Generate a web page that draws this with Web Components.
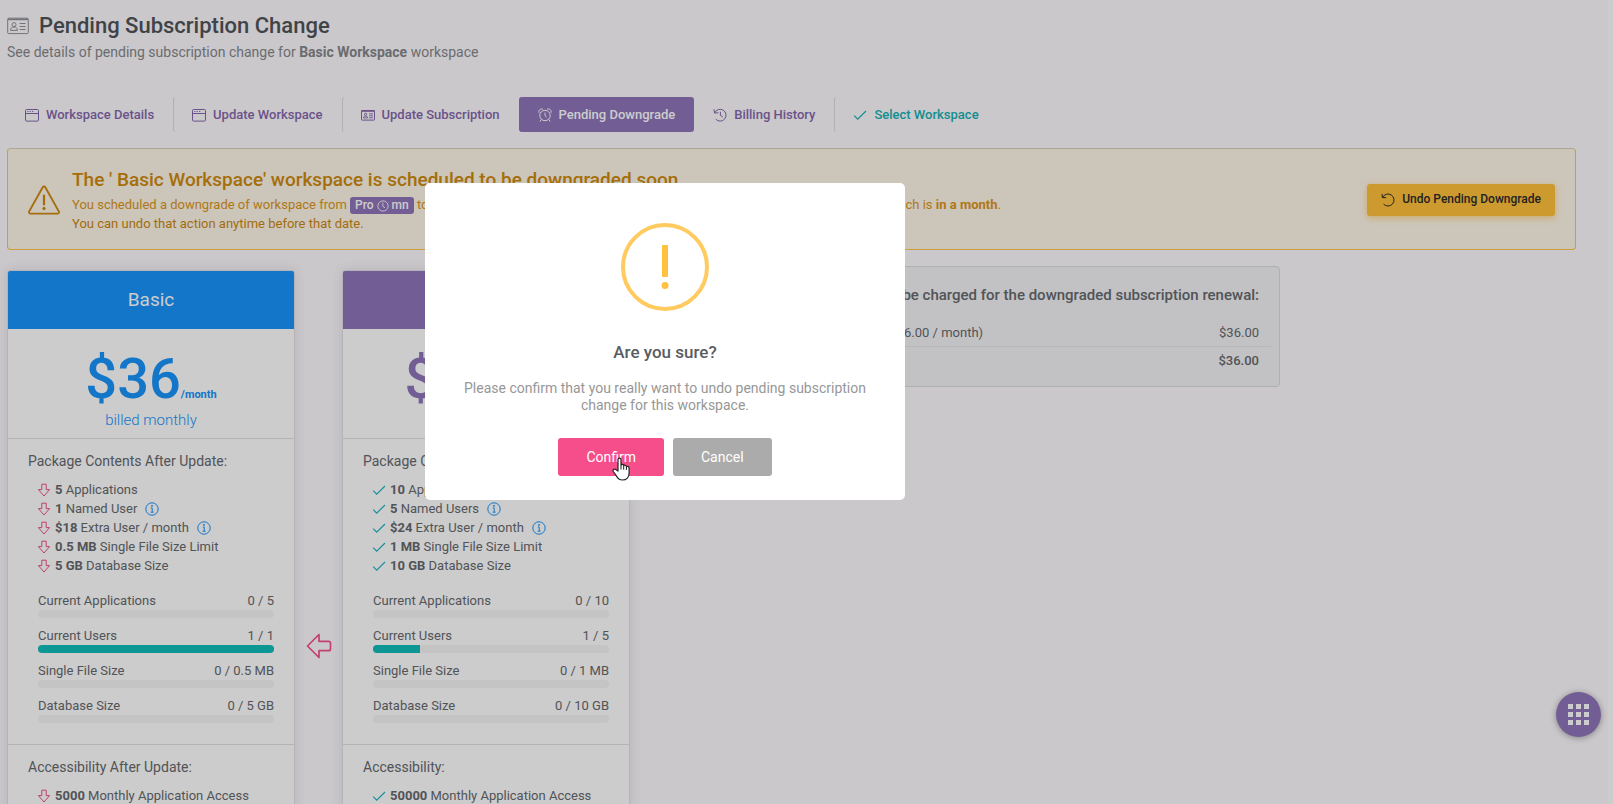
<!DOCTYPE html>
<html lang="en">
<head>
<meta charset="utf-8">
<meta name="viewport" content="width=device-width, initial-scale=1">
<title>Pending Subscription Change</title>
<style>
    html, body {
        height: 100%;
    }
    body {
        margin: 0;
        overflow: hidden;
        background: #fdfafe;
        border-right: 5px solid #ffffff;
        box-sizing: border-box;
        color: #66696e;
        font: 13px/19px Roboto, sans-serif;
    }
    main {
        padding: 13px 32px 0 7px;
    }
    .plans {
        display: flex;
        align-items: flex-start;
        margin-top: 16px;
    }
    .plans charge-summary {
        margin-left: 46px;
    }
    .switch-arrow {
        width: 47px;
        padding-top: 367px;
        text-align: center;
        color: #f4508c;
        --icon-size: 26px;
    }
</style>
</head>
<body>
<main>
    <page-title icon="card" heading="Pending Subscription Change">
        See details of pending subscription change for <b>Basic Workspace</b> workspace
    </page-title>

    <tab-bar>
        <tab-link icon="window">Workspace Details</tab-link>
        <tab-link icon="window">Update Workspace</tab-link>
        <tab-link icon="card-small">Update Subscription</tab-link>
        <tab-link icon="alarm" active>Pending Downgrade</tab-link>
        <tab-link icon="history">Billing History</tab-link>
        <tab-link icon="check" accent>Select Workspace</tab-link>
    </tab-bar>

    <warning-alert heading="The ' Basic Workspace' workspace is scheduled to be downgraded soon" action="Undo Pending Downgrade">
        You scheduled a downgrade of workspace from <plan-badge name="Pro"></plan-badge> to <plan-badge name="Basic"></plan-badge>. The downgrade will occur at the end of the current billing period, which is <b>in a month</b>.<br>
        <span class="dark">You can undo that action anytime before that date.</span>
    </warning-alert>

    <div class="plans">
        <plan-card id="basic"></plan-card>
        <div class="switch-arrow"><ui-icon name="left"></ui-icon></div>
        <plan-card id="pro"></plan-card>
        <charge-summary></charge-summary>
    </div>
</main>
<apps-button></apps-button>
<confirm-modal heading="Are you sure?">
    Please confirm that you really want to undo pending subscription change for this workspace.
</confirm-modal>

<script>
const ICONS = {
    'card': ['0 0 22 18', '<rect x=".7" y="1.2" width="20.6" height="15.4" rx="1"/><path d="M1 2.4h20" stroke-width="1.6"/><circle cx="7" cy="7.6" r="2"/><path d="M3.6 13.4c0-2.6 1.4-3.4 3.4-3.4s3.4.8 3.4 3.4zM12.6 6.5h6M12.6 9.5h6M12.6 12.5h6"/>'],
    'card-small': ['0 0 14 14', '<rect x=".5" y="2.5" width="13" height="9.6" rx=".6"/><path d="M.5 3h13" stroke-width="1.6"/><circle cx="4.600" cy="6.300" r="1.100" stroke-width=".9"/><path d="M2.600 9.900c0-1.400.8-1.900 2-1.900s2 .5 2 1.900zM8 5.800h4M8 7.800h4M8 9.800h4" stroke-width=".9"/>'],
    'window': ['0 0 14 14', '<rect x=".5" y="1.5" width="13" height="11.6" rx="1"/><path d="M1 5.500h12M2.300 3.500h1.200M4.700 3.500h1.200M7.100 3.500h1.200"/>'],
    'alarm': ['0 0 14 14', '<circle cx="7" cy="7.5" r="5.2"/><path d="M7 4.600v3.100l1.600 1.500M3.200 11.500l-1.300 2M10.800 11.500l1.300 2M1 4.800C.2 2.400 2.400.2 4.800 1.200M13 4.800C13.800 2.400 11.600.2 9.200 1.200"/>'],
    'history': ['0 0 14 14', '<path d="M1.700 4.900a5.900 5.900 0 1 1 1.100 6.300M1 1.200l.5 3.900 3.900-.4M7.400 3.800v3.600l2.500 1.700"/>'],
    'undo': ['0 0 14 14', '<path d="M1.600 4.400a6 6 0 1 1 1 6.700M1.200.9v3.700h3.900"/>'],
    'check': ['0 0 14 14', '<path d="M1.200 7.600l3.500 3.500L13 3" stroke-width="1.200"/>'],
    'down': ['0 0 14 14', '<path d="M4.800 1.200h4.400v5.400h3.400L7 13 1.400 6.600h3.400z" stroke-linejoin="round"/>'],
    'left': ['0 0 26 26', '<path d="M13 1.500L1.500 13 13 24.500v-6.800h9.500a2 2 0 0 0 2-2v-5.400a2 2 0 0 0-2-2H13z" stroke-width="1.700" stroke-linejoin="round"/>'],
    'info': ['0 0 14 14', '<circle cx="7" cy="7" r="6.200"/><path d="M5.800 6h1.400v4M5.600 10.200h3"/><circle cx="7" cy="3.900" r=".5" fill="currentColor"/>'],
    'clock': ['0 0 14 14', '<circle cx="7" cy="7" r="6"/><path d="M6.800 3v4.300l2.500 1.900"/>'],
    'warning': ['0 0 32 30', '<path d="M14.700 2.200a1.500 1.500 0 0 1 2.600 0l13.500 24.200a1.500 1.500 0 0 1-1.300 2.200h-27a1.500 1.500 0 0 1-1.300-2.200z" stroke-width="1.900"/><path d="M16 10.500v9" stroke-width="2.200" stroke-linecap="round"/><circle cx="16" cy="23.500" r="1.200" fill="currentColor"/>']
};

class UiIcon extends HTMLElement {
    constructor() {
        super();
        this.attachShadow({ mode: 'open' });
    }

    connectedCallback() {
        const [box, shapes] = ICONS[this.getAttribute('name')];
        this.shadowRoot.innerHTML = `
        <style>
            :host {
                display: inline-flex;
                flex: none;
                vertical-align: middle;
            }
            svg {
                width: var(--icon-size, 14px);
                height: var(--icon-size, 14px);
                fill: none;
                stroke: currentColor;
            }
        </style>
        <svg viewBox="${box}" aria-hidden="true">${shapes}</svg>
        `;
    }
}

class PageTitle extends HTMLElement {
    constructor() {
        super();
        this.attachShadow({ mode: 'open' });
    }

    connectedCallback() {
        this.shadowRoot.innerHTML = `
        <style>
            :host {
                display: block;
            }
            h1 {
                display: flex;
                align-items: center;
                gap: 10px;
                margin: 0;
                color: #4f5459;
                font-size: 22px;
                line-height: 26px;
                font-weight: 500;
            }
            ui-icon {
                --icon-size: 22px;
                color: #909296;
            }
            p {
                margin: 3px 0 0;
                color: #86888b;
                font-size: 14px;
                line-height: 20px;
            }
        </style>
        <h1><ui-icon name="${this.getAttribute('icon')}"></ui-icon>${this.getAttribute('heading')}</h1>
        <p><slot></slot></p>
        `;
    }
}

class TabBar extends HTMLElement {
    constructor() {
        super();
        this.attachShadow({ mode: 'open' });
    }

    connectedCallback() {
        this.shadowRoot.innerHTML = `
        <style>
            :host {
                display: block;
                margin-top: 35px;
            }
            nav {
                display: flex;
            }
        </style>
        <nav><slot></slot></nav>
        `;
    }
}

class TabLink extends HTMLElement {
    constructor() {
        super();
        this.attachShadow({ mode: 'open' });
    }

    connectedCallback() {
        this.shadowRoot.innerHTML = `
        <style>
            :host {
                display: block;
            }
            a {
                display: flex;
                align-items: center;
                gap: 7px;
                height: 35px;
                padding: 0 19px 0 18px;
                border-left: 1px solid #dcdce0;
                border-radius: 3px;
                color: #8568ad;
                font-weight: 500;
                text-decoration: none;
            }
            :host(:first-child) a {
                padding-left: 17px;
                border-color: transparent;
            }
            :host([active]) a {
                background: #9075bb;
                border-color: #9075bb;
                color: #ffffff;
            }
            :host([icon="history"]) a {
                border-color: transparent;
            }
            :host([accent]) a {
                color: #16b2b4;
            }
        </style>
        <a href="#"><ui-icon name="${this.getAttribute('icon')}"></ui-icon><slot></slot></a>
        `;
    }
}

class PlanBadge extends HTMLElement {
    constructor() {
        super();
        this.attachShadow({ mode: 'open' });
    }

    connectedCallback() {
        this.shadowRoot.innerHTML = `
        <style>
            :host {
                display: inline-flex;
                align-items: center;
                gap: 3px;
                height: 17px;
                padding: 0 5px;
                border-radius: 3px;
                background: #9075bb;
                color: #ffffff;
                font-size: 12px;
                font-weight: 500;
                vertical-align: middle;
                --icon-size: 12px;
            }
        </style>
        ${this.getAttribute('name')}<ui-icon name="clock"></ui-icon>mn
        `;
    }
}

class WarningAlert extends HTMLElement {
    constructor() {
        super();
        this.attachShadow({ mode: 'open' });
    }

    connectedCallback() {
        this.shadowRoot.innerHTML = `
        <style>
            :host {
                display: flex;
                align-items: center;
                gap: 12px;
                margin-top: 16px;
                padding: 17px 20px 16px;
                border: 1px solid #ffc548;
                border-top-color: #d8d0bc;
                border-radius: 4px;
                background: #fff7e8;
                color: #dc961a;
            }
            .sign {
                --icon-size: 32px;
                color: #ce8a10;
            }
            .text {
                flex: 1;
            }
            h2 {
                margin: 0 0 1px;
                color: #cf8a0c;
                font-size: 19px;
                line-height: 28px;
                font-weight: 500;
            }
            p {
                margin: 0;
            }
            ::slotted(.dark) {
                color: #cc8810;
            }
            button {
                display: flex;
                align-items: center;
                gap: 7px;
                height: 32px;
                padding: 0 14px;
                border: 0;
                border-radius: 3px;
                background: #ffc13a;
                box-shadow: 0 2px 6px rgba(255, 184, 34, 0.5);
                color: #2b2b2b;
                font: 500 12px/19px Roboto, sans-serif;
            }
        </style>
        <ui-icon class="sign" name="warning"></ui-icon>
        <div class="text">
            <h2>${this.getAttribute('heading')}</h2>
            <p><slot></slot></p>
        </div>
        <button type="button"><ui-icon name="undo"></ui-icon>${this.getAttribute('action')}</button>
        `;
    }
}

const PLANS = {
    basic: {
        name: 'Basic', color: '#1894fc', price: '$36', mark: 'down', markColor: '#f0508a', suffix: ' After Update',
        features: [['5', 'Applications'], ['1', 'Named User', true], ['$18', 'Extra User / month', true], ['0.5 MB', 'Single File Size Limit'], ['5 GB', 'Database Size']],
        usage: [['Current Applications', '0 / 5', 0], ['Current Users', '1 / 1', 100], ['Single File Size', '0 / 0.5 MB', 0], ['Database Size', '0 / 5 GB', 0]],
        access: ['5000', 'Monthly Application Access']
    },
    pro: {
        name: 'Pro', color: '#9075bb', price: '$120', mark: 'check', markColor: '#1fb4c4', suffix: '',
        features: [['10', 'Applications'], ['5', 'Named Users', true], ['$24', 'Extra User / month', true], ['1 MB', 'Single File Size Limit'], ['10 GB', 'Database Size']],
        usage: [['Current Applications', '0 / 10', 0], ['Current Users', '1 / 5', 20], ['Single File Size', '0 / 1 MB', 0], ['Database Size', '0 / 10 GB', 0]],
        access: ['50000', 'Monthly Application Access']
    }
};

class PlanCard extends HTMLElement {
    constructor() {
        super();
        this.attachShadow({ mode: 'open' });
    }

    connectedCallback() {
        const plan = PLANS[this.id];
        const feature = ([amount, label, info]) => `
            <li><ui-icon name="${plan.mark}"></ui-icon><span><b>${amount}</b> ${label}</span>${info ? '<ui-icon class="info" name="info"></ui-icon>' : ''}</li>`;
        this.shadowRoot.innerHTML = `
        <style>
            :host {
                display: block;
                flex: none;
                width: 286px;
                margin-top: 4px;
                border: 1px solid #e1e2e6;
                border-radius: 3px;
                background: #ffffff;
                box-shadow: 0 0 12px rgba(60, 50, 90, 0.12);
                overflow: hidden;
            }
            h3 {
                margin: 0;
                background: ${plan.color};
                color: #ffffff;
                font-size: 19px;
                line-height: 58px;
                font-weight: 400;
                text-align: center;
            }
            .price {
                padding: 18px 0 8px;
                color: ${plan.color};
                text-align: center;
            }
            .amount {
                font-size: 56px;
                line-height: 64px;
                font-weight: 500;
            }
            .amount small {
                font-size: 11px;
                line-height: 11px;
                font-weight: 700;
            }
            .cycle {
                font-size: 15px;
                line-height: 19px;
                font-weight: 300;
            }
            section {
                padding: 12px 20px 21px;
                border-top: 1px solid #e1e2e6;
            }
            h4 {
                margin: 0 0 9px;
                font-size: 14px;
                line-height: 20px;
                font-weight: 400;
            }
            ul {
                margin: 0;
                padding: 0 0 0 9px;
                list-style: none;
            }
            li {
                display: flex;
                align-items: center;
                gap: 4px;
                color: ${plan.markColor};
            }
            li span {
                color: #66696e;
            }
            li b {
                font-weight: 700;
            }
            .info {
                margin-left: 4px;
                color: #1894fc;
            }
            .usage {
                display: grid;
                gap: 8px;
                padding: 16px 0 0 10px;
            }
            label {
                display: flex;
                flex-wrap: wrap;
                justify-content: space-between;
            }
            progress {
                display: block;
                width: 100%;
                height: 8px;
                border: 0;
                border-radius: 4px;
                background: #f6f6f7;
                overflow: hidden;
                appearance: none;
            }
            progress::-webkit-progress-bar {
                background: #f6f6f7;
            }
            progress::-webkit-progress-value {
                background: #0fbdba;
            }
        </style>
        <h3>${plan.name}</h3>
        <div class="price">
            <div class="amount">${plan.price}<small>/month</small></div>
            <div class="cycle">billed monthly</div>
        </div>
        <section>
            <h4>Package Contents${plan.suffix}:</h4>
            <ul>${plan.features.map(feature).join('')}</ul>
            <div class="usage">
                ${plan.usage.map(([label, value, percent]) => `
                <label><span>${label}</span><span>${value}</span><progress max="100" value="${percent}"></progress></label>`).join('')}
            </div>
        </section>
        <section>
            <h4>Accessibility${plan.suffix}:</h4>
            <ul>${feature(plan.access)}</ul>
        </section>
        `;
    }
}

class ChargeSummary extends HTMLElement {
    constructor() {
        super();
        this.attachShadow({ mode: 'open' });
    }

    connectedCallback() {
        this.shadowRoot.innerHTML = `
        <style>
            :host {
                display: block;
                flex: 0 1 604px;
                box-sizing: border-box;
                padding: 18px 8px 12px;
                border: 1px solid #dadbde;
                border-radius: 4px;
                background: #f3f3f5;
            }
            h3 {
                margin: 0;
                padding: 0 12px;
                font-size: 15px;
                line-height: 20px;
                font-weight: 500;
                text-align: right;
            }
            table {
                width: 100%;
                margin-top: 14px;
                border-collapse: collapse;
            }
            td, th {
                padding: 4px 12px;
                font-weight: 400;
                text-align: left;
            }
            td {
                text-align: right;
            }
            tr + tr > * {
                border-top: 1px solid #e4e5e8;
                font-weight: 500;
            }
        </style>
        <h3>The following amount will be charged for the downgraded subscription renewal:</h3>
        <table>
            <tr><th scope="row">Basic workspace, billed monthly ($36.00 / month)</th><td>$36.00</td></tr>
            <tr><th scope="row">Total</th><td>$36.00</td></tr>
        </table>
        `;
    }
}

class AppsButton extends HTMLElement {
    constructor() {
        super();
        this.attachShadow({ mode: 'open' });
    }

    connectedCallback() {
        this.shadowRoot.innerHTML = `
        <style>
            :host {
                position: fixed;
                right: 12px;
                bottom: 67px;
            }
            button {
                display: grid;
                place-content: center;
                width: 45px;
                height: 45px;
                padding: 0;
                border: 0;
                border-radius: 50%;
                background: #9075bb;
                box-shadow: 0 1px 6px rgba(0, 0, 0, 0.35);
            }
            svg {
                width: 21px;
                height: 21px;
                fill: #ffffff;
            }
        </style>
        <button type="button" aria-label="Applications">
            <svg viewBox="0 0 21 21"><path d="M0 0h5v5H0zM8 0h5v5H8zM16 0h5v5h-5zM0 8h5v5H0zM8 8h5v5H8zM16 8h5v5h-5zM0 16h5v5H0zM8 16h5v5H8zM16 16h5v5h-5z"/></svg>
        </button>
        `;
    }
}

class ConfirmModal extends HTMLElement {
    constructor() {
        super();
        this.attachShadow({ mode: 'open' });
    }

    connectedCallback() {
        this.shadowRoot.innerHTML = `
        <style>
            :host {
                position: fixed;
                inset: 0;
                background: rgba(0, 0, 0, 0.2);
            }
            .dialog {
                position: absolute;
                left: 425px;
                top: 183px;
                width: 480px;
                box-sizing: border-box;
                padding: 40px 32px 24px;
                border-radius: 5px;
                background: #ffffff;
                text-align: center;
            }
            .sign {
                display: block;
                width: 88px;
                height: 88px;
                margin: 0 auto;
            }
            h2 {
                margin: 29px 0 0;
                color: #595d62;
                font-size: 17px;
                line-height: 24px;
                font-weight: 500;
            }
            p {
                margin: 16px 0 24px;
                color: #979797;
                font-size: 14px;
                line-height: 17px;
            }
            .buttons {
                display: flex;
                justify-content: center;
                gap: 9px;
            }
            button {
                position: relative;
                height: 38px;
                padding: 0 28px;
                border: 0;
                border-radius: 3px;
                background: #ababab;
                color: #ffffff;
                font: 400 14px/19px Roboto, sans-serif;
            }
            .confirm {
                background: #f64e8b;
            }
            .pointer {
                position: absolute;
                left: 54px;
                top: 19px;
                width: 18px;
                height: 24px;
            }
        </style>
        <div class="dialog" role="dialog" aria-modal="true" aria-labelledby="heading">
            <svg class="sign" viewBox="0 0 88 88" aria-hidden="true">
                <circle cx="44" cy="44" r="42" fill="none" stroke="#ffcb60" stroke-width="4"/>
                <rect x="41" y="22" width="6" height="32" rx="1" fill="#ffc23f"/>
                <circle cx="44" cy="62.500" r="3.500" fill="#ffc23f"/>
            </svg>
            <h2 id="heading">${this.getAttribute('heading')}</h2>
            <p><slot></slot></p>
            <div class="buttons">
                <button type="button" class="confirm">Confirm
                    <svg class="pointer" viewBox="0 0 18 24" aria-hidden="true">
                        <path d="M6 14V2.500C6 .6 9 .6 9 2.500V8c.5-1 2.700-.8 2.700.7.700-.9 2.700-.6 2.700 1 .8-.7 2.700-.2 2.700 1.500V16c0 4-2.600 7-6.600 7-3.400 0-5-1.800-6.400-4.600L1.200 14.500C.3 12.800 2.300 11.300 3.800 12.600z" fill="#fff" stroke="#222" stroke-width="1.200" stroke-linejoin="round"/>
                        <path d="M9 8v4.500M11.700 9v3.700M14.400 10v3" fill="none" stroke="#222"/>
                    </svg>
                </button>
                <button type="button">Cancel</button>
            </div>
        </div>
        `;
    }
}

customElements.define('ui-icon', UiIcon);
customElements.define('page-title', PageTitle);
customElements.define('tab-bar', TabBar);
customElements.define('tab-link', TabLink);
customElements.define('plan-badge', PlanBadge);
customElements.define('warning-alert', WarningAlert);
customElements.define('plan-card', PlanCard);
customElements.define('charge-summary', ChargeSummary);
customElements.define('apps-button', AppsButton);
customElements.define('confirm-modal', ConfirmModal);
</script>
</body>
</html>
